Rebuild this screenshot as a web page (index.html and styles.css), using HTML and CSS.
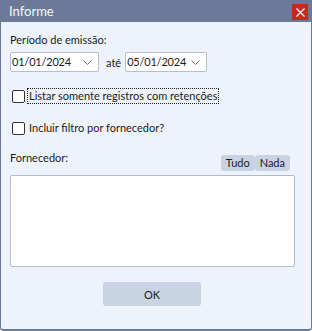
FILE: index.html
```html
<!DOCTYPE html>
<html>
<head>
<meta charset="utf-8">
<link rel="stylesheet" href="styles.css">
</head>
<body>
<div class="window">
  <div class="titlebar">
    <span class="title">Informe</span>
    <span class="close"><svg width="9" height="9" viewBox="0 0 9 9"><path d="M0.5 0.5L8.5 8.5M8.5 0.5L0.5 8.5" stroke="#fff" stroke-width="1.2"/></svg></span>
  </div>
  <div class="content">
    <div class="label">Período de emissão:</div>
    <div class="daterow">
      <div class="datebox d1"><span class="dt">01/01/2024</span><svg class="chev" width="9" height="5" viewBox="0 0 9 5"><path d="M0.5 0.5L4.5 4.5L8.5 0.5" fill="none" stroke="#707070" stroke-width="1"/></svg></div>
      <span class="ate">até</span>
      <div class="datebox d2"><span class="dt">05/01/2024</span><svg class="chev" width="9" height="5" viewBox="0 0 9 5"><path d="M0.5 0.5L4.5 4.5L8.5 0.5" fill="none" stroke="#707070" stroke-width="1"/></svg></div>
    </div>
    <div class="cbrow r1"><span class="cb"></span><span class="cblabel focus">Listar somente registros com retenções</span></div>
    <div class="cbrow r2"><span class="cb"></span><span class="cblabel">Incluir filtro por fornecedor?</span></div>
    <div class="fornrow">
      <span class="label">Fornecedor:</span>
      <div class="btns"><span class="sbtn">Tudo</span><span class="sbtn">Nada</span></div>
    </div>
    <div class="list"></div>
    <div class="okrow"><span class="ok">OK</span></div>
  </div>
</div>
</body>
</html>
```
FILE: styles.css
```css
html, body { margin: 0; padding: 0; }
body { width: 312px; height: 331px; overflow: hidden; font-family: Lato, "Noto Sans", sans-serif; font-size: 11px; color: #1b1b1b; }
.window { width: 312px; height: 331px; box-sizing: border-box; background: #eef3fb; border: 1px solid #6b7a99; border-top: none; border-bottom-width: 2px; border-radius: 0 0 4px 4px; display: flex; flex-direction: column; }
.titlebar { height: 22px; background: #6b7a99; margin: 0 -1px; display: flex; align-items: center; justify-content: space-between; padding: 0 4px 0 9px; }
.title { color: #f4f6fa; font-size: 13px; line-height: 22px; }
.close { width: 16px; height: 16px; background: #c42b1c; display: flex; align-items: center; justify-content: center; margin-top: 2px; }
.content { padding: 10px 16px 0 9px; display: flex; flex-direction: column; }
.label { line-height: 15px; height: 15px; }
.daterow { display: flex; align-items: center; margin-top: 5px; height: 20px; }
.datebox { box-sizing: border-box; height: 20px; background: #fff; border: 1px solid #b5bfcc; border-radius: 2px; display: flex; align-items: center; justify-content: space-between; padding: 0 6px 0 1px; line-height: 18px; }
.dt { font-size: 11px; letter-spacing: -0.2px; }
.d1 { width: 89px; }
.d2 { width: 82px; }
.ate { margin: 0 4px 0 7px; }
.chev { display: block; }
.cbrow { display: flex; align-items: center; height: 18px; padding-left: 2px; }
.r1 { margin-top: 15px; }
.r2 { margin-top: 14px; }
.cb { width: 13px; height: 13px; box-sizing: border-box; border: 1px solid #333; border-radius: 2px; background: #fff; margin-right: 2px; }
.cblabel { line-height: 14px; padding: 0 1px; border: 1px dotted transparent; }
.focus { border-color: #222; }
.fornrow { margin-top: 13px; height: 21px; display: flex; justify-content: space-between; }
.btns { align-self: flex-end; display: flex; margin-right: 5px; }
.sbtn { height: 16px; line-height: 16px; background: #c8d4e3; border-radius: 3px; padding: 0 5px; }
.list { margin-top: 4px; height: 92px; background: #fff; border: 1px solid #b0bccc; border-radius: 2px; box-sizing: border-box; }
.okrow { margin-top: 15px; padding-left: 93px; }
.ok { display: flex; align-items: center; justify-content: center; width: 98px; height: 24px; background: #c8d4e3; border-radius: 3px; }
```
